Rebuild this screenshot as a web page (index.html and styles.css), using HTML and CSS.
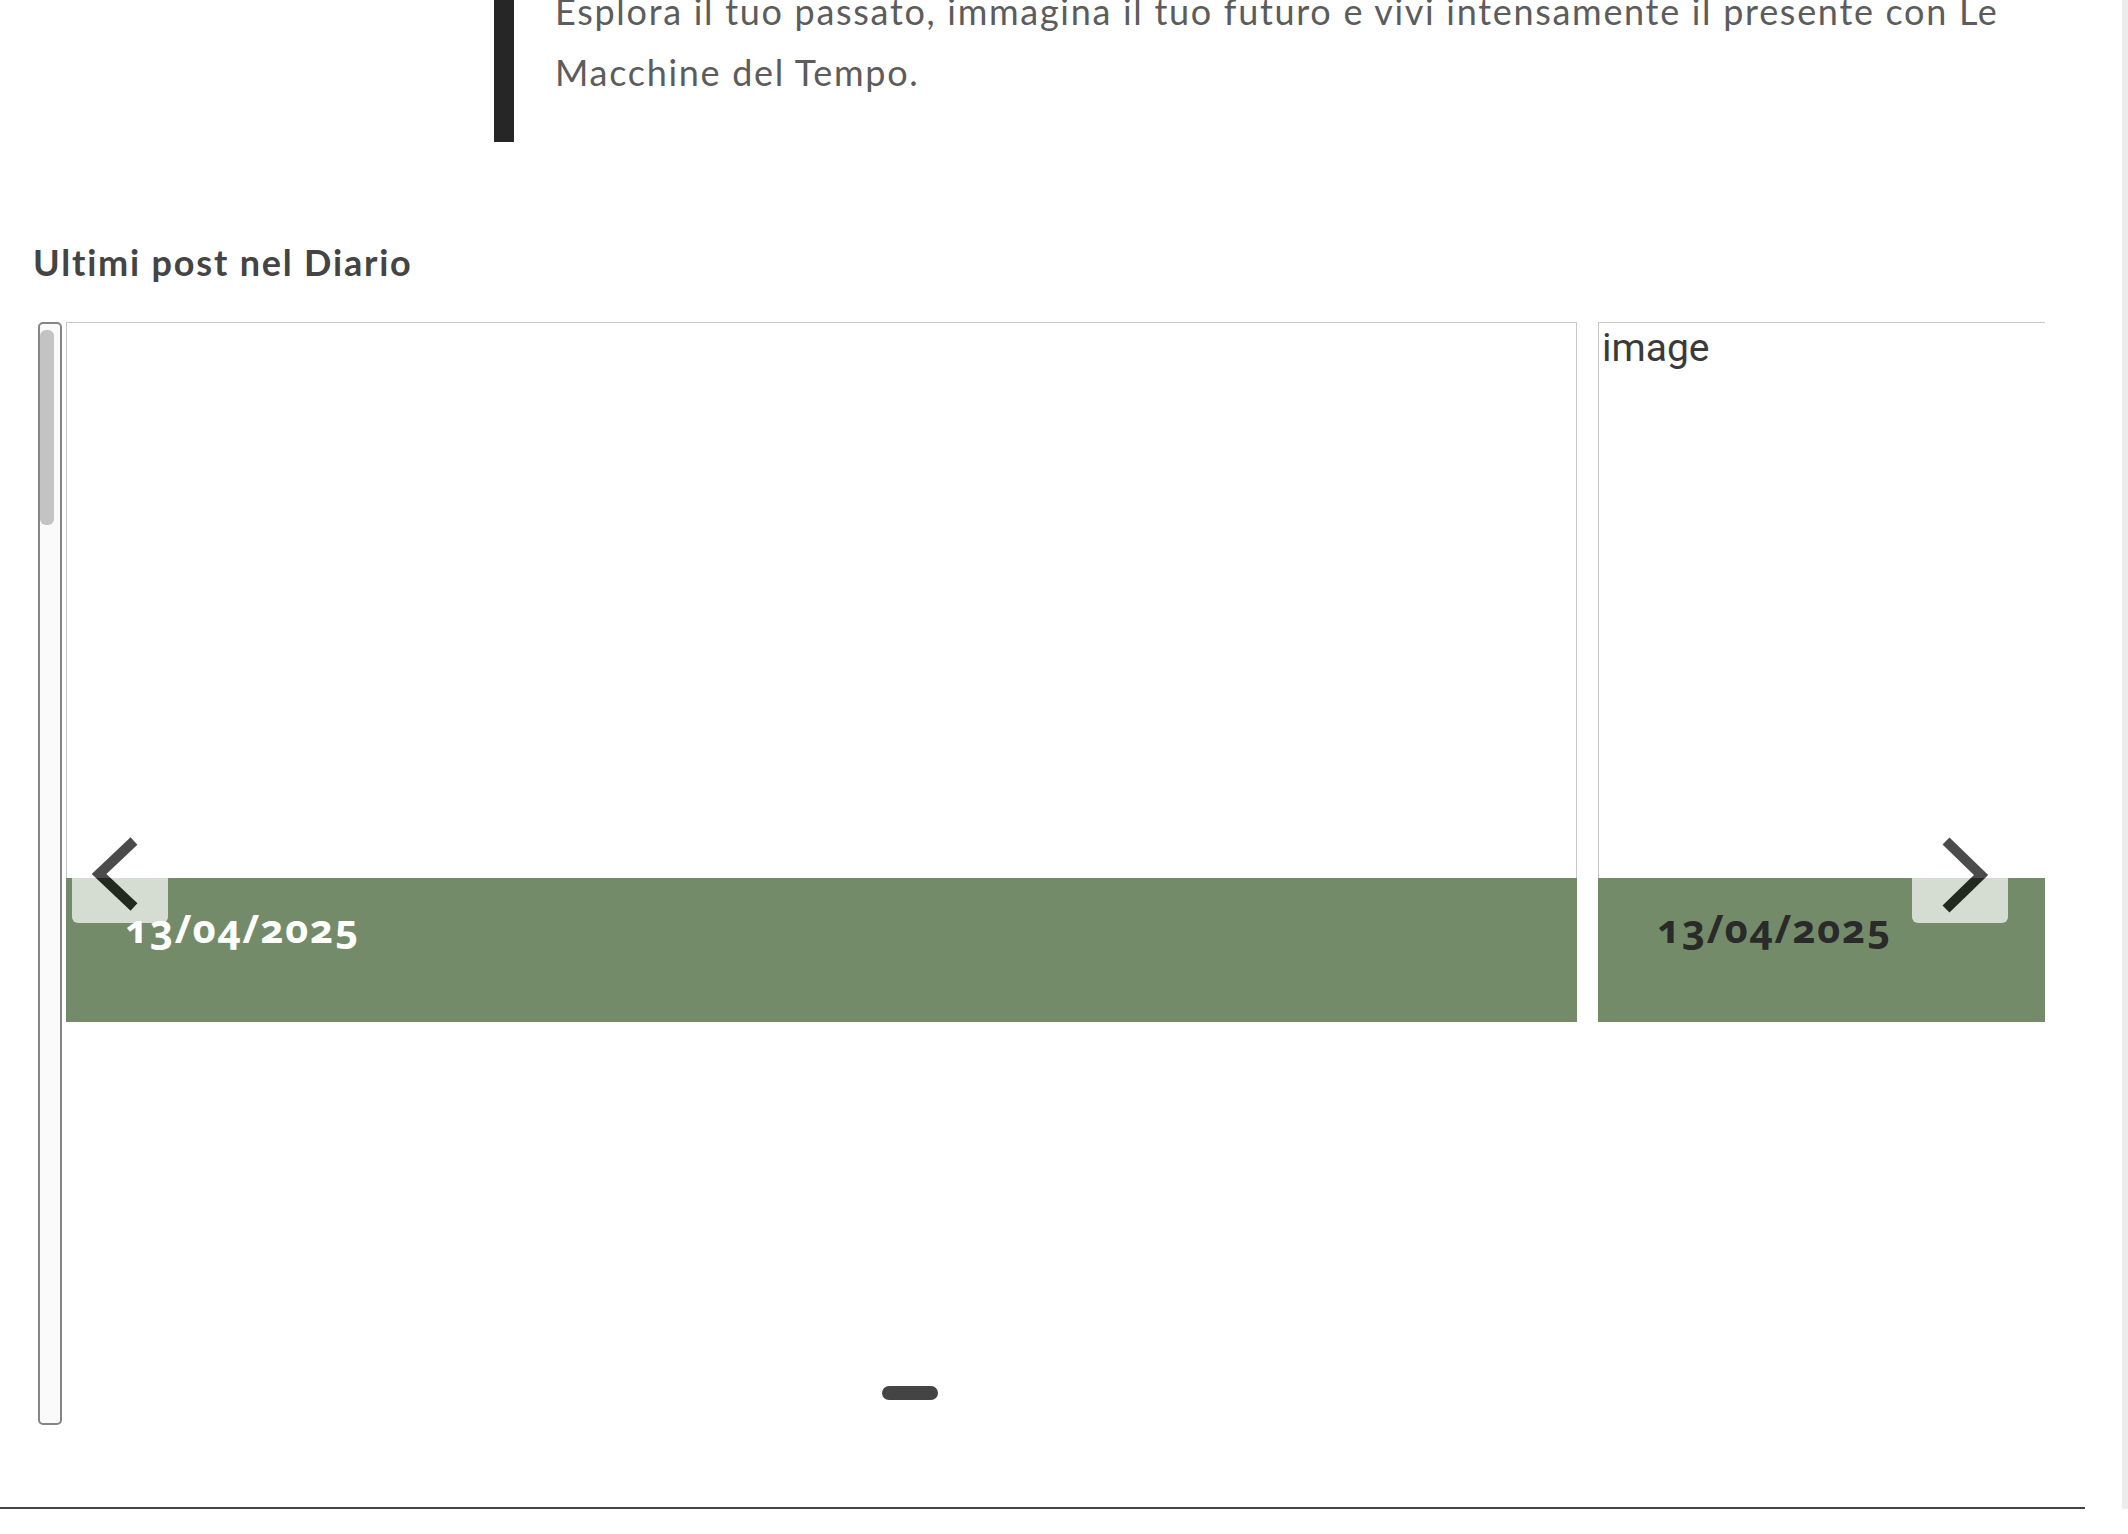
FILE: index.html
```html
<!DOCTYPE html>
<html lang="it">
<head>
  <meta charset="UTF-8">
  <meta name="viewport" content="width=device-width, initial-scale=1.0">
  <title>Le Macchine del Tempo</title>
  <link rel="stylesheet" href="styles.css">
</head>
<body>
  <blockquote class="intro">
    <p>Esplora il tuo passato, immagina il tuo futuro e vivi intensamente il presente con Le Macchine del Tempo.</p>
  </blockquote>

  <section class="diario">
    <h2>Ultimi post nel Diario</h2>
    <div class="slider">
      <div class="rail"><div class="rail-thumb"></div></div>
      <div class="viewport">
        <div class="track">
          <div class="slide">
            <div class="thumb"></div>
            <div class="meta"><span class="date">13/04/2025</span></div>
          </div>
          <div class="slide">
            <div class="thumb"><span class="alt">image</span></div>
            <div class="meta"><span class="date dark">13/04/2025</span></div>
          </div>
        </div>
        <div class="dots"><span class="dot"></span></div>
      </div>
      <button class="nav prev" aria-label="Precedente">
        <svg width="96" height="98" viewBox="0 0 96 98"><path d="M62 16 L27 49 L62 82" fill="none" stroke="#000" stroke-width="10"/></svg>
      </button>
      <button class="nav next" aria-label="Successivo">
        <svg width="96" height="98" viewBox="0 0 96 98"><path d="M34 16 L69 50 L34 84" fill="none" stroke="#000" stroke-width="10"/></svg>
      </button>
    </div>
  </section>

  <hr class="footer-line">
</body>
</html>
```

FILE: styles.css
```css
body {
  margin: 0;
  font-family: 'Lato', 'Open Sans', sans-serif;
  color: #444;
  background: #fff;
  border-right: 6px solid #ececec;
  overflow: hidden;
}
.intro {
  margin: -57px 0 0 494px;
  padding: 38px 0 39px 41px;
  border-left: 20px solid #262626;
  width: 1520px;
}
.intro p {
  margin: 0;
  font-size: 36px;
  line-height: 61px;
  letter-spacing: 1.7px;
  color: #5c5c5c;
}
.diario {
  margin-top: 98px;
}
.diario h2 {
  margin: 0 0 38px 33px;
  font-size: 36px;
  line-height: 44px;
  font-weight: 700;
  letter-spacing: 1.8px;
  color: #444;
}
.slider {
  position: relative;
  display: flex;
  gap: 4px;
  padding-left: 38px;
  height: 1103px;
}
.rail {
  width: 20px;
  height: 1099px;
  border: 2px solid #858585;
  border-radius: 5px;
  background: #fafafa;
  flex-shrink: 0;
}
.rail-thumb {
  width: 14px;
  height: 195px;
  margin-top: 6px;
  border-radius: 6px;
  background: #c3c3c3;
}
.viewport {
  width: 1979px;
  overflow: hidden;
}
.track {
  display: flex;
  gap: 21px;
}
.slide {
  width: 1511px;
  flex-shrink: 0;
}
.thumb {
  height: 555px;
  border: 1px solid #c8c8c8;
  border-bottom: none;
}
.alt {
  display: block;
  padding: 2px 0 0 3px;
  font-family: 'Roboto', sans-serif;
  font-size: 39px;
  line-height: 46px;
  color: #3a3a3a;
}
.meta {
  height: 144px;
  box-sizing: border-box;
  padding: 30px 0 0 59px;
  background: #748b69;
}
.date {
  display: block;
  font-family: 'Noto Sans', sans-serif;
  font-variant-numeric: oldstyle-nums;
  font-weight: 700;
  font-size: 40px;
  line-height: 40px;
  letter-spacing: 1.5px;
  color: #fff;
}
.date.dark {
  color: #2a2a2a;
}
.dots {
  margin: 364px 0 0 816px;
  height: 14px;
}
.dot {
  display: block;
  width: 56px;
  height: 14px;
  border-radius: 7px;
  background: #444;
}
.nav {
  position: absolute;
  top: 503px;
  width: 96px;
  height: 98px;
  padding: 0;
  border: none;
  border-radius: 6px;
  background: #fff;
  opacity: 0.7;
  cursor: pointer;
}
.nav svg {
  display: block;
}
.nav.prev {
  left: 72px;
}
.nav.next {
  left: 1912px;
}
.footer-line {
  width: 2085px;
  height: 2px;
  margin: 82px 0 0 0;
  border: none;
  background: #444;
}
```
